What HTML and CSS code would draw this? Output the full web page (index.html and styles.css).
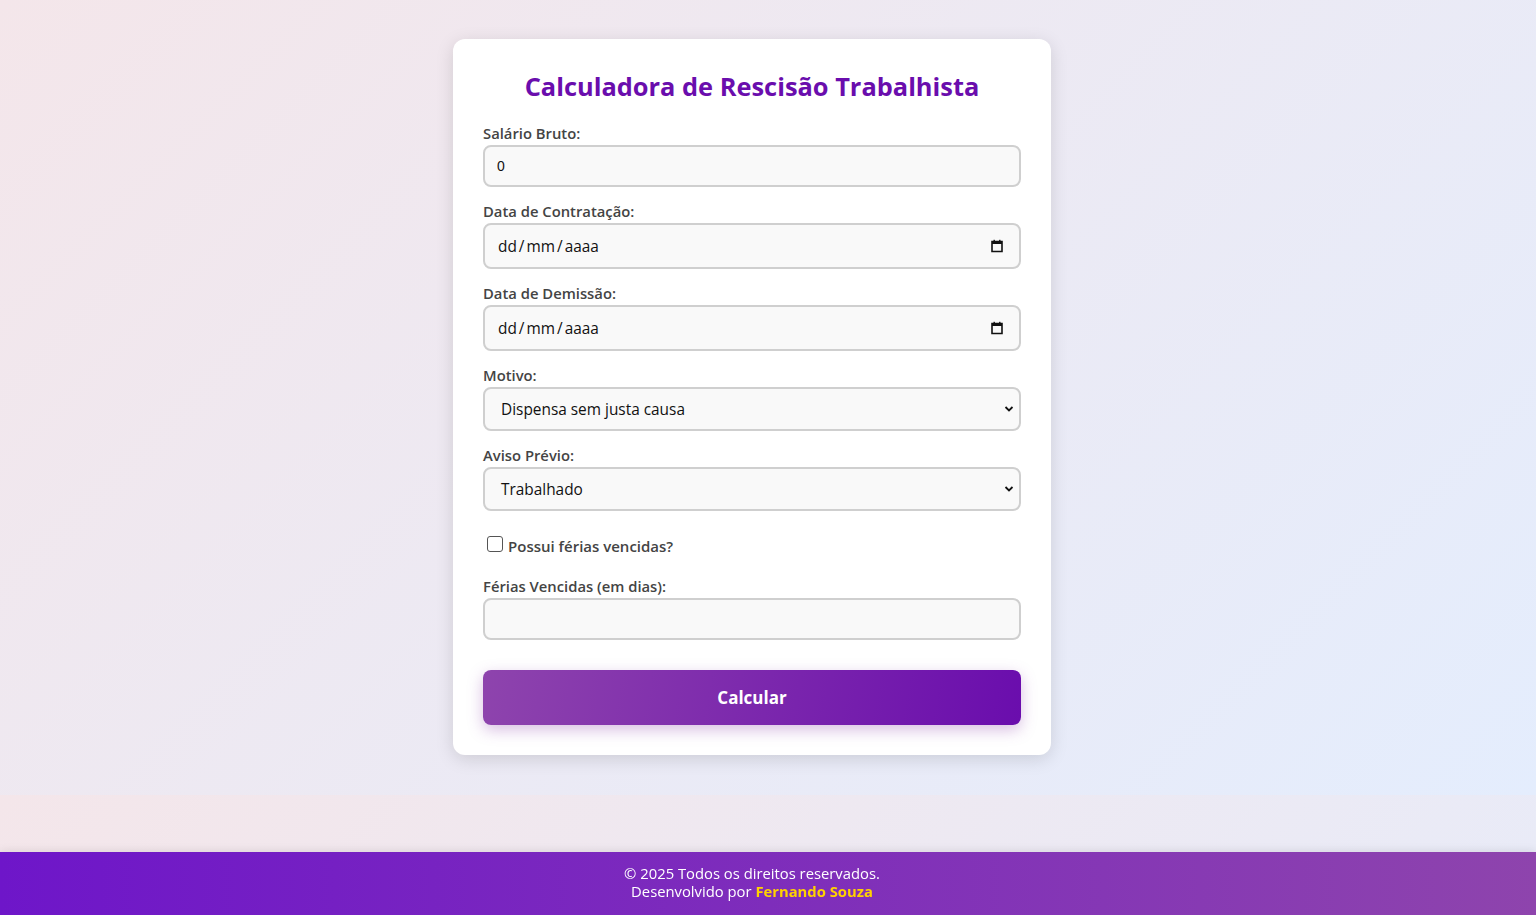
FILE: index.html
```html
<!DOCTYPE html>
<html lang="pt-BR">
<head>
<meta charset="utf-8">
<title>Calculadora de Rescisão Trabalhista</title>
<link rel="stylesheet" href="styles.css">
</head>
<body>
<main class="page">
  <section class="card">
    <h1 class="title">Calculadora de Rescisão Trabalhista</h1>
    <form class="form">
      <div class="group">
        <label class="label" for="salario">Salário Bruto:</label>
        <input class="field field-number" id="salario" type="text" value="0">
      </div>
      <div class="group">
        <label class="label">Data de Contratação:</label>
        <div class="field field-date">
          <span class="date-text">dd<span class="sep">/</span>mm<span class="sep">/</span>aaaa</span>
          <svg class="cal" width="14" height="14" viewBox="0 0 14 14"><path d="M2 2.5h10v10H2z" fill="none" stroke="#111" stroke-width="1.6"/><rect x="2" y="2" width="10" height="3" fill="#111"/><rect x="3.5" y="0.8" width="1.4" height="2" fill="#111"/><rect x="9.1" y="0.8" width="1.4" height="2" fill="#111"/></svg>
        </div>
      </div>
      <div class="group">
        <label class="label">Data de Demissão:</label>
        <div class="field field-date">
          <span class="date-text">dd<span class="sep">/</span>mm<span class="sep">/</span>aaaa</span>
          <svg class="cal" width="14" height="14" viewBox="0 0 14 14"><path d="M2 2.5h10v10H2z" fill="none" stroke="#111" stroke-width="1.6"/><rect x="2" y="2" width="10" height="3" fill="#111"/><rect x="3.5" y="0.8" width="1.4" height="2" fill="#111"/><rect x="9.1" y="0.8" width="1.4" height="2" fill="#111"/></svg>
        </div>
      </div>
      <div class="group">
        <label class="label" for="motivo">Motivo:</label>
        <div class="field field-select">
          <span>Dispensa sem justa causa</span>
          <svg class="chev" width="10" height="8" viewBox="0 0 10 8"><path d="M1.5 2l3.5 3.5L8.5 2" fill="none" stroke="#111" stroke-width="1.8"/></svg>
        </div>
      </div>
      <div class="group">
        <label class="label" for="aviso">Aviso Prévio:</label>
        <div class="field field-select">
          <span>Trabalhado</span>
          <svg class="chev" width="10" height="8" viewBox="0 0 10 8"><path d="M1.5 2l3.5 3.5L8.5 2" fill="none" stroke="#111" stroke-width="1.8"/></svg>
        </div>
      </div>
      <div class="group group-check">
        <label class="check-label"><span class="checkbox"></span>Possui férias vencidas?</label>
      </div>
      <div class="group">
        <label class="label" for="ferias">Férias Vencidas (em dias):</label>
        <input class="field field-number" id="ferias" type="text" value="">
      </div>
      <button class="btn" type="button">Calcular</button>
    </form>
  </section>
</main>
<footer class="footer">
  <p>© 2025 Todos os direitos reservados.</p>
  <p>Desenvolvido por <strong class="author">Fernando Souza</strong></p>
</footer>
</body>
</html>
```
FILE: styles.css
```css
html, body {
  margin: 0;
  padding: 0;
}
body {
  font-family: "Open Sans", "Noto Sans", sans-serif;
  background: linear-gradient(135deg, #f4e6ea 0%, #e4edfd 100%);
  color: #333;
}
.page {
  display: flex;
  justify-content: center;
  padding: 39px 32px 40px 0;
}
.card {
  width: 538px;
  padding: 30px;
  background: #fff;
  border-radius: 12px;
  box-shadow: 0 4px 18px rgba(0, 0, 0, 0.13);
}
.title {
  margin: 0 0 19px;
  text-align: center;
  color: #6a0dad;
  font-size: 25.4px;
  line-height: 35px;
  font-weight: 700;
}
.form {
  display: flex;
  flex-direction: column;
}
.group {
  display: flex;
  flex-direction: column;
  margin-bottom: 14px;
}
.label {
  font-size: 14.8px;
  line-height: 20px;
  margin-bottom: 2px;
  font-weight: 600;
  color: #444;
}
.field {
  box-sizing: border-box;
  width: 100%;
  border: 2px solid #cfcfcf;
  border-radius: 8px;
  background: #f9f9f9;
  font-family: inherit;
  font-size: 15.4px;
  color: #111;
  padding: 0 12px;
  outline: none;
}
.field-number {
  height: 42px;
  font-family: "Liberation Sans", Arial, sans-serif;
  font-size: 14px;
}
.field-date {
  height: 46px;
  display: flex;
  align-items: center;
  justify-content: space-between;
  padding-left: 13px;
  padding-right: 15px;
}
.sep {
  margin: 0 2px;
}
.cal {
  display: block;
}
.field-select {
  height: 44px;
  display: flex;
  align-items: center;
  justify-content: space-between;
  padding-left: 16px;
  padding-right: 5px;
}
.chev {
  display: block;
}
.group-check {
  margin-top: 10px;
  margin-bottom: 19px;
}
.check-label {
  display: flex;
  align-items: center;
  font-size: 15px;
  line-height: 22px;
  font-weight: 600;
  color: #444;
}
.checkbox {
  box-sizing: border-box;
  width: 16px;
  height: 16px;
  margin: -4px 5px 0 4px;
  border: 1px solid #555;
  border-radius: 3px;
  background: #fff;
}
.btn {
  margin-top: 16px;
  height: 55px;
  border: 0;
  border-radius: 8px;
  background: linear-gradient(100deg, #8e44ad 0%, #6a0dad 100%);
  color: #fff;
  font-family: inherit;
  font-size: 17px;
  font-weight: 700;
  box-shadow: 0 5px 15px rgba(142, 68, 173, 0.35);
  cursor: pointer;
}
.footer {
  position: fixed;
  left: 0;
  right: 0;
  bottom: 0;
  height: 63px;
  box-sizing: border-box;
  padding: 12px 32px 0 0;
  background: linear-gradient(90deg, #6e16c9 0%, #8e44ad 100%);
  box-shadow: 0 -2px 8px rgba(0, 0, 0, 0.08);
  color: #fff;
  text-align: center;
  font-size: 14.8px;
  line-height: 18px;
}
.footer p {
  margin: 0;
}
.author {
  color: #ffd200;
  font-weight: 700;
}
```
